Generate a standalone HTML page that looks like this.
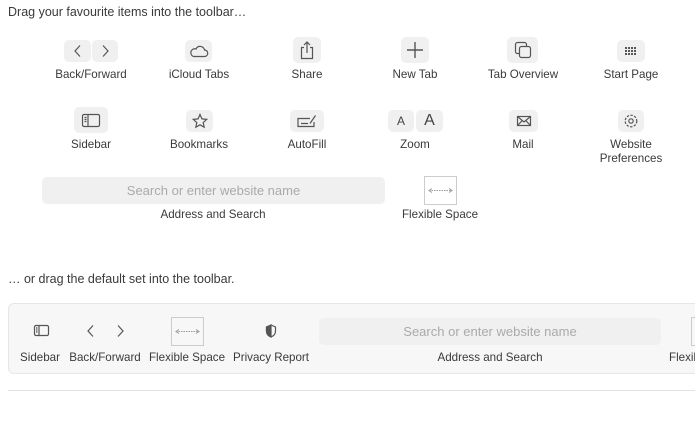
<!DOCTYPE html><html><head><style>
body{margin:0;width:695px;height:436px;background:#fff;font-family:"Liberation Sans",sans-serif;font-size:11.6px;color:#3a3a3a;position:relative;overflow:hidden}
.a{position:absolute}
.b{position:absolute;background:#f0f0f0;border-radius:5px;display:flex;align-items:center;justify-content:center}
.l{position:absolute;text-align:center;width:120px;line-height:14px}
svg{stroke:#555;fill:none;stroke-width:1.2}
</style></head><body>
<div class="a" style="left:8px;top:5px;font-size:12.5px">Drag your favourite items into the toolbar…</div>

<div class="b" style="left:64px;top:40px;width:27px;height:22px"><svg width="10" height="14"><path d="M7 1.5L2 7L7 12.5"/></svg></div>
<div class="b" style="left:92px;top:40px;width:26px;height:22px"><svg width="10" height="14"><path d="M3 1.5L8 7L3 12.5"/></svg></div>
<div class="l" style="left:31px;top:68px">Back/Forward</div>
<div class="b" style="left:185px;top:40px;width:27px;height:22px"><svg width="20" height="13"><path d="M4.5 11.5h11a3 3 0 0 0 0-6.5a4.5 4.5 0 0 0-8.5-1a3.3 3.3 0 0 0-2.5 7.5z"/></svg></div>
<div class="l" style="left:139px;top:68px">iCloud Tabs</div>
<div class="b" style="left:293px;top:37px;width:28px;height:26px"><svg width="16" height="20"><path d="M5 7.5H2.5v11h11v-11H11M8 13V2M5 5L8 2L11 5"/></svg></div>
<div class="l" style="left:247px;top:68px">Share</div>
<div class="b" style="left:401px;top:37px;width:28px;height:26px"><svg width="18" height="18" style="stroke-width:1.4"><path d="M9 1v16M1 9h16"/></svg></div>
<div class="l" style="left:355px;top:68px">New Tab</div>
<div class="b" style="left:507px;top:37px;width:31px;height:26px"><svg width="20" height="20"><rect x="2.5" y="2.5" width="11" height="11" rx="2"/><rect x="6.5" y="6.5" width="11" height="11" rx="2" fill="#f0f0f0"/></svg></div>
<div class="l" style="left:463px;top:68px">Tab Overview</div>
<div class="b" style="left:617px;top:40px;width:28px;height:22px"><svg width="14" height="10" style="stroke:none;fill:#555"><g><rect x="1" y="1" width="2" height="2"/><rect x="4" y="1" width="2" height="2"/><rect x="7" y="1" width="2" height="2"/><rect x="10" y="1" width="2" height="2"/><rect x="1" y="4" width="2" height="2"/><rect x="4" y="4" width="2" height="2"/><rect x="7" y="4" width="2" height="2"/><rect x="10" y="4" width="2" height="2"/><rect x="1" y="7" width="2" height="2"/><rect x="4" y="7" width="2" height="2"/><rect x="7" y="7" width="2" height="2"/><rect x="10" y="7" width="2" height="2"/></g></svg></div>
<div class="l" style="left:571px;top:68px">Start Page</div>

<div class="b" style="left:74px;top:107px;width:34px;height:26px"><svg width="20" height="15"><rect x="1.5" y="1.5" width="17" height="12" rx="1.5"/><path d="M7 1.5v12M3.5 4.5h2M3.5 6.5h2M3.5 8.5h2"/></svg></div>
<div class="l" style="left:31px;top:138px">Sidebar</div>
<div class="b" style="left:186px;top:110px;width:27px;height:22px"><svg width="16" height="16"><path d="M8 1.5l2 4.4 4.7.5-3.5 3.2 1 4.6L8 11.8 3.8 14.2l1-4.6L1.3 6.4 6 5.9z"/></svg></div>
<div class="l" style="left:139px;top:138px">Bookmarks</div>
<div class="b" style="left:290px;top:110px;width:34px;height:22px"><svg width="22" height="15"><path d="M14 4.5H2v8h16V8M5 9.5h7M14 9.5l5.5-8"/></svg></div>
<div class="l" style="left:247px;top:138px">AutoFill</div>
<div class="b" style="left:388px;top:110px;width:26px;height:22px;font-size:12px;color:#444">A</div>
<div class="b" style="left:416px;top:110px;width:27px;height:22px;font-size:16px;color:#444">A</div>
<div class="l" style="left:355px;top:138px">Zoom</div>
<div class="b" style="left:509px;top:110px;width:29px;height:22px"><svg width="16" height="12"><rect x="1.5" y="1.5" width="13" height="9"/><path d="M1.5 1.5L8 7l6.5-5.5M1.5 10.5L6 5.8M14.5 10.5L10 5.8"/></svg></div>
<div class="l" style="left:463px;top:138px">Mail</div>
<div class="b" style="left:618px;top:110px;width:26px;height:22px"><svg width="16" height="16"><circle cx="8" cy="8" r="2.2"/><circle cx="8" cy="8" r="5.8" stroke-dasharray="2.4 1.4"/></svg></div>
<div class="l" style="left:571px;top:138px">Website<br>Preferences</div>

<div class="b" style="left:42px;top:177px;width:343px;height:27px;color:#aaa;font-size:13px">Search or enter website name</div>
<div class="l" style="left:153px;top:208px">Address and Search</div>
<div class="a" style="left:424px;top:176px;width:31px;height:27px;border:1px solid #ccc;box-sizing:content-box"><svg width="31" height="27" style="stroke:#999;stroke-width:1"><path d="M4 13.5h23" stroke-dasharray="1.5 1"/><path d="M7 11.5l-3 2 3 2M24 11.5l3 2-3 2" style="stroke-dasharray:none"/></svg></div>
<div class="l" style="left:380px;top:208px">Flexible Space</div>

<div class="a" style="left:8px;top:272px;font-size:12.5px">… or drag the default set into the toolbar.</div>
<div class="a" style="left:8px;top:303px;width:700px;height:69px;background:#f7f7f7;border:1px solid #e6e6e6;border-radius:6px"></div>
<svg class="a" style="left:33px;top:324px" width="18" height="14"><rect x="1.5" y="1.5" width="14" height="10" rx="1.5"/><path d="M6 1.5v10M3 4h1.5M3 6h1.5M3 8h1.5"/></svg>
<div class="l" style="left:-20px;top:351px">Sidebar</div>
<svg class="a" style="left:86px;top:324px" width="10" height="14"><path d="M7 1.5L2 7L7 12.5"/></svg>
<svg class="a" style="left:115px;top:324px" width="10" height="14"><path d="M3 1.5L8 7L3 12.5"/></svg>
<div class="l" style="left:45px;top:351px">Back/Forward</div>
<div class="a" style="left:171px;top:317px;width:31px;height:27px;border:1px solid #ccc"><svg width="31" height="27" style="stroke:#999;stroke-width:1"><path d="M4 13.5h23" stroke-dasharray="1.5 1"/><path d="M7 11.5l-3 2 3 2M24 11.5l3 2-3 2"/></svg></div>
<div class="l" style="left:127px;top:351px">Flexible Space</div>
<svg class="a" style="left:265px;top:324px" width="12" height="14"><path d="M6 1L1.5 3v4c0 3 2 5 4.5 6c2.5-1 4.5-3 4.5-6V3z"/><path d="M6 1v12c-2.5-1-4.5-3-4.5-6V3z" fill="#555"/></svg>
<div class="l" style="left:211px;top:351px">Privacy Report</div>
<div class="b" style="left:319px;top:318px;width:342px;height:27px;color:#aaa;font-size:13px">Search or enter website name</div>
<div class="l" style="left:430px;top:351px">Address and Search</div>
<div class="a" style="left:691px;top:317px;width:10px;height:27px;border:1px solid #ccc"></div>
<div class="a" style="left:669px;top:351px;line-height:14px">Flexible</div>
<div class="a" style="left:8px;top:390px;width:687px;height:1px;background:#e3e3e3"></div>
</body></html>
